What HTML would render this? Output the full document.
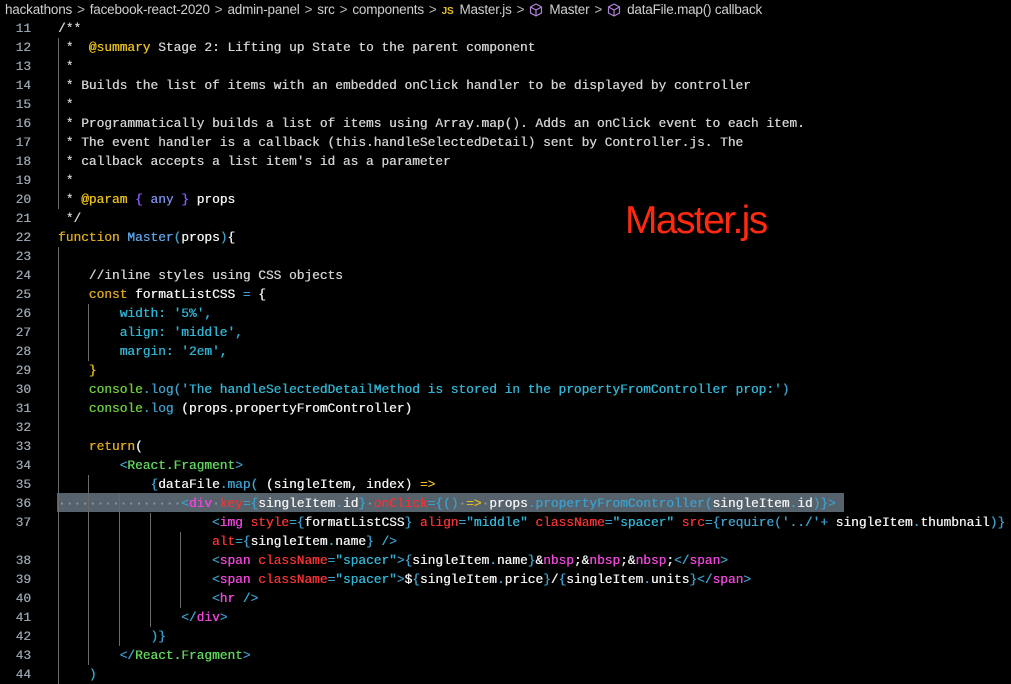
<!DOCTYPE html>
<html><head><meta charset="utf-8"><style>
html,body{margin:0;padding:0;background:#000;width:1011px;height:679px;overflow:hidden}
.bc{position:absolute;left:5px;top:2px;font:13.5px "Liberation Sans",sans-serif;color:#d0d0d0;white-space:nowrap;letter-spacing:-0.2px}
.bc .sep{color:#bbb;margin:0 5px}
.js{color:#e8c020;font-weight:bold;font-size:10px;margin-right:6px}
.cube{display:inline-block;vertical-align:-3px;margin-right:6px}
.nums{position:absolute;left:0;top:19px;width:31px;text-align:right;font:12.83px/19px "Liberation Mono",monospace;color:#97a3ad;white-space:pre;text-shadow:0.3px 0 currentColor}
.code{position:absolute;left:58px;top:19px;font:12.83px/19px "Liberation Mono",monospace;color:#f0f0f0;white-space:pre;margin:0;text-shadow:0.35px 0 currentColor}
.hl{position:absolute;left:57px;top:493px;width:787px;height:19px;background:#56636d}
.g{position:absolute;width:1px;background:#6a6a6a}
.c{color:#d0d0d0}.y{color:#e6bd18}.kw{color:#dca81e}.fn{color:#5ba2e6}.p{color:#30b4d4}
.gr{color:#6ccc3a}.t{color:#3d9fcb}.tn{color:#5fd65a}.m{color:#f045dc}.r{color:#f23232}
.pu{color:#8a5cff}.an{color:#7a8ee8}.d{color:#8b98a3}
.big{position:absolute;left:625px;top:199px;font:39px "Liberation Sans",sans-serif;color:#ff2a0f;letter-spacing:-1.6px}
</style></head><body>
<div class="bc">hackathons<span class="sep">&gt;</span>facebook-react-2020<span class="sep">&gt;</span>admin-panel<span class="sep">&gt;</span>src<span class="sep">&gt;</span>components<span class="sep">&gt;</span><span class="js">JS</span>Master.js<span class="sep">&gt;</span><svg class="cube" width="14" height="14" viewBox="0 0 14 14"><path d="M7 1L12.5 4v6L7 13 1.5 10V4z M1.5 4L7 7l5.5-3 M7 7v6" fill="none" stroke="#b180d7" stroke-width="1.2"/></svg>Master<span class="sep">&gt;</span><svg class="cube" width="14" height="14" viewBox="0 0 14 14"><path d="M7 1L12.5 4v6L7 13 1.5 10V4z M1.5 4L7 7l5.5-3 M7 7v6" fill="none" stroke="#b180d7" stroke-width="1.2"/></svg>dataFile.map() callback</div>

<div class="hl"></div>
<div class="g" style="left:58px;top:38px;height:171px"></div>
<div class="g" style="left:58px;top:247px;height:437px"></div>
<div class="g" style="left:88px;top:304px;height:57px"></div>
<div class="g" style="left:88px;top:475px;height:190px"></div>
<div class="g" style="left:119px;top:494px;height:152px"></div>
<div class="g" style="left:150px;top:513px;height:114px"></div>
<div class="g" style="left:180px;top:532px;height:76px"></div>

<div class="nums">11
12
13
14
15
16
17
18
19
20
21
22
23
24
25
26
27
28
29
30
31
32
33
34
35
36
37

38
39
40
41
42
43
44</div>

<pre class="code"><span class="c">/**</span>
<span class="c"> *  </span><span class="y">@summary</span><span class="c"> Stage 2: Lifting up State to the parent component</span>
<span class="c"> *</span>
<span class="c"> * Builds the list of items with an embedded onClick handler to be displayed by controller</span>
<span class="c"> *</span>
<span class="c"> * Programmatically builds a list of items using Array.map(). Adds an onClick event to each item.</span>
<span class="c"> * The event handler is a callback (this.handleSelectedDetail) sent by Controller.js. The</span>
<span class="c"> * callback accepts a list item's id as a parameter</span>
<span class="c"> *</span>
<span class="c"> * </span><span class="y">@param</span> <span class="pu">{</span> <span class="an">any</span> <span class="pu">}</span> props
<span class="c"> */</span>
<span class="kw">function</span> <span class="fn">Master</span><span class="t">(</span>props<span class="t">)</span>{

    <span class="c">//inline styles using CSS objects</span>
    <span class="kw">const</span> formatListCSS <span class="t">=</span> {
        <span class="p">width: '5%',</span>
        <span class="p">align: 'middle',</span>
        <span class="p">margin: '2em',</span>
    <span class="y">}</span>
    <span class="gr">console</span><span class="t">.log(</span><span class="p">'The handleSelectedDetailMethod is stored in the propertyFromController prop:'</span><span class="t">)</span>
    <span class="gr">console</span><span class="t">.log</span> (props.propertyFromController)

    <span class="kw">return</span>(
        <span class="t">&lt;</span><span class="tn">React.Fragment</span><span class="t">&gt;</span>
            <span class="t">{</span>dataFile<span class="t">.map(</span> (singleItem, index) <span class="y">=&gt;</span>
<span class="d">················</span><span class="t">&lt;</span><span class="m">div</span><span class="d">·</span><span class="r">key</span><span class="t">={</span>singleItem<span class="t">.</span>id<span class="t">}</span><span class="d">·</span><span class="r">onClick</span><span class="t">={()</span><span class="d">·</span><span class="y">=&gt;</span><span class="d">·</span>props<span class="t">.propertyFromController(</span>singleItem<span class="t">.</span>id<span class="t">)}&gt;</span>
                    <span class="t">&lt;</span><span class="m">img</span> <span class="r">style</span><span class="t">={</span>formatListCSS<span class="t">}</span> <span class="r">align</span><span class="t">=</span><span class="p">"middle"</span> <span class="r">className</span><span class="t">=</span><span class="p">"spacer"</span> <span class="r">src</span><span class="t">={require('../'+</span> singleItem<span class="t">.</span>thumbnail<span class="t">)}</span>
                    <span class="r">alt</span><span class="t">={</span>singleItem<span class="t">.</span>name<span class="t">}</span> <span class="t">/&gt;</span>
                    <span class="t">&lt;</span><span class="m">span</span> <span class="r">className</span><span class="t">=</span><span class="p">"spacer"</span><span class="t">&gt;{</span>singleItem<span class="t">.</span>name<span class="t">}</span>&amp;<span class="m">nbsp</span>;&amp;<span class="m">nbsp</span>;&amp;<span class="m">nbsp</span>;<span class="t">&lt;/</span><span class="m">span</span><span class="t">&gt;</span>
                    <span class="t">&lt;</span><span class="m">span</span> <span class="r">className</span><span class="t">=</span><span class="p">"spacer"</span><span class="t">&gt;</span>$<span class="t">{</span>singleItem<span class="t">.</span>price<span class="t">}</span>/<span class="t">{</span>singleItem<span class="t">.</span>units<span class="t">}&lt;/</span><span class="m">span</span><span class="t">&gt;</span>
                    <span class="t">&lt;</span><span class="m">hr</span> <span class="t">/&gt;</span>
                <span class="t">&lt;/</span><span class="m">div</span><span class="t">&gt;</span>
            <span class="t">)}</span>
        <span class="t">&lt;/</span><span class="tn">React.Fragment</span><span class="t">&gt;</span>
    <span class="t">)</span></pre>

<div class="big">Master.js</div>
</body></html>
